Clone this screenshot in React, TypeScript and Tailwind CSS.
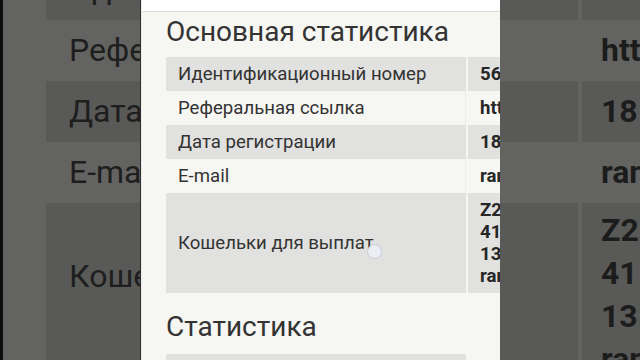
const font = { fontFamily: 'Roboto, "Noto Sans", sans-serif' }

const rows = [
  { label: 'Идентификационный номер', value: ['56321847'], dark: true },
  { label: 'Реферальная ссылка', value: ['https://ref.link/56321847'], dark: false },
  { label: 'Дата регистрации', value: ['18.03.2019'], dark: true },
  { label: 'E-mail', value: ['random@mail.ru'], dark: false },
  {
    label: 'Кошельки для выплат',
    value: ['Z268459213574', '410011234567890', '1324567890', 'random@mail.ru'],
    dark: true,
  },
]

const sideLabels = ['Иден', 'Рефе', 'Дата', 'E-ma', 'Коше']
const sideValues = [['56'], ['htt'], ['18'], ['ran'], ['Z2', '41', '13', 'ran']]

function LeftSide() {
  return (
    <div className="flex h-full w-[141px] shrink-0 border-r border-[#2e2e2e] bg-[#636361]">
      <div className="w-[3px] shrink-0 bg-[#0e0e0e]" />
      <div className="ml-[43px] flex-1 overflow-hidden">
        <div className="-mt-[41px] flex flex-col">
          {sideLabels.map((l, i) => (
            <div
              key={l}
              className={`whitespace-nowrap pl-[23px] pt-[9px] text-[32px] leading-[42px] text-[#1e1e1e] ${
                i % 2 === 0 ? 'bg-[#595957]' : ''
              } ${i === 4 ? 'h-[200px] pt-[52px]' : 'h-[61px]'}`}
            >
              {l}
            </div>
          ))}
        </div>
      </div>
    </div>
  )
}

function RightSide() {
  return (
    <div className="h-full w-[140px] shrink-0 overflow-hidden bg-[#636361]">
      <div className="-mt-[41px] flex flex-col">
        {sideValues.map((v, i) => (
          <div key={i} className="flex gap-[4px]">
            <div className={`w-[78px] shrink-0 ${i % 2 === 0 ? 'bg-[#595957]' : ''}`} />
            <div
              className={`flex-1 whitespace-nowrap pl-[19px] text-[32px] font-bold leading-[42px] text-[#1c1c1c] ${
                i % 2 === 0 ? 'bg-[#595957]' : ''
              } ${i === 4 ? 'h-[200px] pt-[6px] leading-[43px]' : 'h-[61px] pt-[9px]'}`}
            >
              {v.map(x => (
                <div key={x}>{x}</div>
              ))}
            </div>
          </div>
        ))}
      </div>
    </div>
  )
}

function Table({ items }: { items: typeof rows }) {
  return (
    <div className="grid grid-cols-[300px_300px] gap-x-[2px]">
      {items.map(r => (
        <div key={r.label} className="contents">
          <div
            className={`flex items-center px-3 py-[6px] text-[18.6px] leading-[22px] text-[#333333] ${
              r.dark ? 'bg-[#e1e1df]' : 'border-r border-[#ebebe7]'
            }`}
          >
            {r.label}
          </div>
          <div
            className={`whitespace-nowrap px-3 py-[6px] text-[18.6px] font-bold leading-[22px] text-[#262626] ${
              r.dark ? 'bg-[#e1e1df]' : ''
            }`}
          >
            {r.value.map(v => (
              <div key={v}>{v}</div>
            ))}
          </div>
        </div>
      ))}
    </div>
  )
}

export default function App() {
  return (
    <div className="flex h-[360px] w-[640px] overflow-hidden bg-[#111]" style={font}>
      <LeftSide />
      <div className="relative h-full w-[359px] shrink-0 overflow-hidden border-l border-[#ececea] bg-[#f6f6f2]">
        <div className="h-[12px] border-b border-[#dcdcda] bg-white" />
        <div className="pl-[24px]">
          <h2 className="mb-[9px] mt-[4px] whitespace-nowrap text-[28px] leading-[32px] text-[#333333]">
            Основная статистика
          </h2>
          <Table items={rows} />
          <h2 className="mb-[11px] mt-[18px] text-[28px] leading-[32px] text-[#333333]">Статистика</h2>
          <div className="h-[40px] w-[300px] bg-[#e1e1df]" />
        </div>
        <div className="absolute left-[225px] top-[244px] h-[15px] w-[15px] rounded-full border border-[#c3c9db] bg-[#eef0f7] opacity-90" />
      </div>
      <RightSide />
    </div>
  )
}
